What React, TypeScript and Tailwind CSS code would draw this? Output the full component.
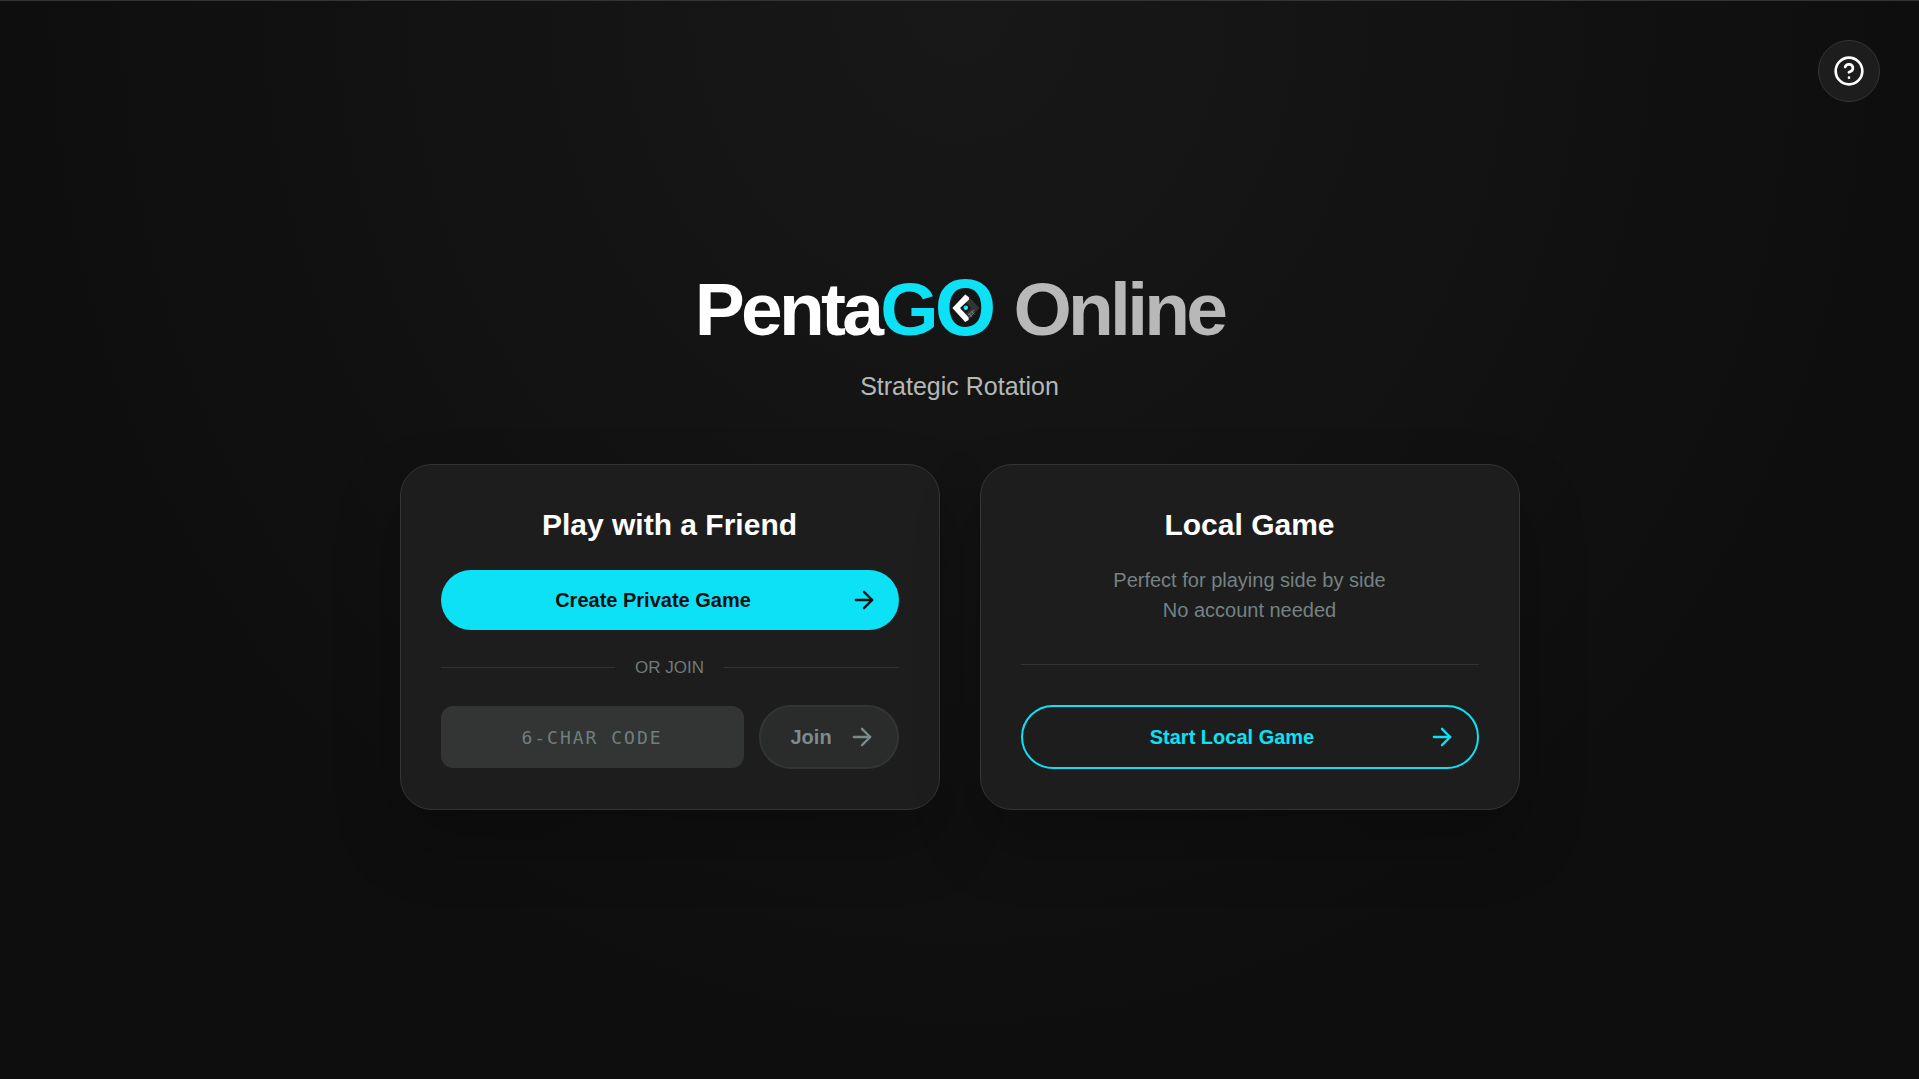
import { ArrowRight, CircleQuestionMark } from "lucide-react"
import { useState } from "react"

function LogoMark() {
  return (
    <svg viewBox="0 0 28 28" className="size-7" aria-hidden="true">
      <path d="M13.5 5L18 4L27.5 14L15 27L9.5 19Z" fill="#333535" />
      <path d="M14 8.5L19 14L14 20L8.5 14Z" fill="#171717" />
      <path d="M13.2 0.4L17 3.2V5.4L8 14L16.6 23.6V26L13.2 28L0.4 14Z" fill="#ffffff" />
      <circle cx="13.8" cy="13.8" r="2.3" fill="#0de1f5" />
      <path d="M13.3 14.6h1M14.3 13h1" stroke="#ffffff" strokeWidth="0.8" />
      <path d="M16 21l6-5M17.5 23l5-4.5M17 19l3 4M19.5 17.5l3 3" stroke="#7a8585" strokeWidth="0.9" fill="none" />
    </svg>
  )
}

export default function App() {
  const [code, setCode] = useState("")

  return (
    <div className="flex min-h-screen flex-col border-t border-[#333535] bg-[#0e0e0e] bg-[radial-gradient(ellipse_at_top,#181818_0%,#0e0e0e_70%)] font-['Liberation_Sans',Arial,sans-serif] text-white">
      {/* Help */}
      <button
        type="button"
        aria-label="How to play"
        className="absolute top-10 right-[39px] flex size-[62px] items-center justify-center rounded-full border border-[#333535] bg-[#1d1d1d]"
      >
        <CircleQuestionMark className="size-8" />
      </button>

      <main className="mx-auto flex w-full max-w-[1120px] flex-1 flex-col justify-center pb-[2px]">
        {/* Title */}
        <header className="mb-15 text-center">
          <h1 className="text-[75px] leading-[82px] font-bold tracking-tighter">
            Penta
            <span className="text-[#0de1f5]">
              G
              <span className="relative inline-block text-[79px] leading-none tracking-normal">
                O
                <span className="absolute inset-0 flex items-center justify-center">
                  <LogoMark />
                </span>
              </span>
            </span>{" "}
            <span className="text-[#b8b8b8]">Online</span>
          </h1>
          <p className="mt-[18px] text-[25px] leading-9 text-[#b4b8b8]">Strategic Rotation</p>
        </header>

        <div className="grid grid-cols-2 gap-10">
          {/* Online game */}
          <section className="flex flex-col rounded-[32px] border border-[#333535] bg-[#1d1d1d] p-10 shadow-[0_32px_64px_rgba(0,0,0,0.25)]">
            <h2 className="text-center text-3xl leading-10 font-bold">Play with a Friend</h2>
            <button
              type="button"
              className="mt-[25px] flex h-15 w-full items-center gap-2 rounded-full bg-[#0de1f5] pr-[21px] pl-6 text-xl font-bold text-[#111111]"
            >
              <span className="flex-1">Create Private Game</span>
              <ArrowRight className="size-7" />
            </button>
            <div className="my-6 flex items-center gap-5 text-[17px] leading-[27px] text-[#6f7a7a]">
              <span className="h-px flex-1 bg-[#333535]" />
              OR JOIN
              <span className="h-px flex-1 bg-[#333535]" />
            </div>
            <form className="mt-auto flex items-center gap-[15px]" onSubmit={(e) => e.preventDefault()}>
              <input
                type="text"
                aria-label="Game code"
                placeholder="6-CHAR CODE"
                maxLength={6}
                value={code}
                onChange={(e) => setCode(e.target.value.toUpperCase())}
                className="h-[62px] min-w-0 flex-1 rounded-xl bg-[#333535] text-center font-['DejaVu_Sans_Mono',monospace] text-lg tracking-[2px] placeholder:text-[#6f7f80]"
              />
              <button
                type="submit"
                disabled={code.length < 6}
                className="flex h-16 w-[140px] items-center justify-between rounded-full border-2 border-[#333535] bg-[#2a2b2b] pr-[21px] pl-[30px] text-xl font-bold text-[#7d8b8c]"
              >
                Join
                <ArrowRight className="size-7" />
              </button>
            </form>
          </section>

          {/* Local game */}
          <section className="flex flex-col rounded-[32px] border border-[#333535] bg-[#1d1d1d] p-10 shadow-[0_32px_64px_rgba(0,0,0,0.25)]">
            <h2 className="text-center text-3xl leading-10 font-bold">Local Game</h2>
            <p className="mt-5 text-center text-xl leading-[30px] text-[#748283]">
              Perfect for playing side by side
              <br />
              No account needed
            </p>
            <hr className="mt-auto mb-10 border-[#333535]" />
            <button
              type="button"
              className="flex h-16 w-full items-center gap-2 rounded-full border-2 border-[#0de1f5] pr-[21px] pl-[22px] text-xl font-bold text-[#0de1f5]"
            >
              <span className="flex-1">Start Local Game</span>
              <ArrowRight className="size-7" />
            </button>
          </section>
        </div>
      </main>
    </div>
  )
}
